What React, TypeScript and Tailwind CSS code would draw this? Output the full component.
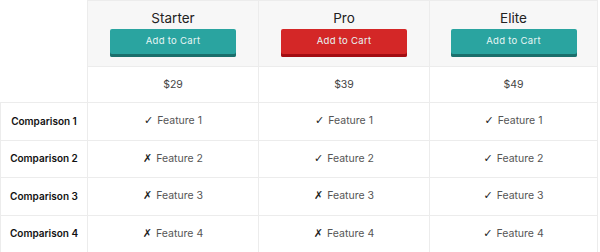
import React from 'react';

interface Plan {
  name: string;
  price: string;
  accent: 'teal' | 'red';
  features: boolean[];
}

const plans: Plan[] = [
  { name: 'Starter', price: '$29', accent: 'teal', features: [true, false, false, false] },
  { name: 'Pro', price: '$39', accent: 'red', features: [true, true, false, false] },
  { name: 'Elite', price: '$49', accent: 'teal', features: [true, true, true, true] },
];

const rows = ['Comparison 1', 'Comparison 2', 'Comparison 3', 'Comparison 4'];

const buttonColor = (accent: Plan['accent']) =>
  accent === 'red'
    ? 'bg-[#d42727] shadow-[inset_0_-3px_0_#a30d12]'
    : 'bg-[#2aa4a0] shadow-[inset_0_-3px_0_#1b6f6c]';

export default function App() {
  return (
    <div
      className="w-[600px] h-[252px] bg-white overflow-hidden"
      style={{ fontFamily: 'Inter, "Open Sans", sans-serif' }}
    >
      <div className="grid grid-cols-[88px_171px_171px_168px] w-[598px]">
        {/* Header */}
        <div className="h-[67px] border-r border-[#ececec]" />
        {plans.map((plan) => (
          <div
            key={plan.name}
            className="h-[67px] bg-[#f7f7f7] border-t border-r border-b border-[#ececec] flex flex-col items-center pt-[8px]"
          >
            <div className="text-[13.5px] leading-[18px] text-[#222]">{plan.name}</div>
            <button
              className={`mt-[2px] w-[126px] h-[28px] rounded-[2px] pb-[3px] text-[9.5px] tracking-[0.3px] text-[#e8f6f5] ${buttonColor(plan.accent)}`}
            >
              Add to Cart
            </button>
          </div>
        ))}

        {/* Price */}
        <div className="h-[36px] border-r border-b border-[#ececec]" />
        {plans.map((plan) => (
          <div
            key={plan.name}
            className="h-[36px] border-r border-b border-[#ececec] flex items-center justify-center text-[10.5px] text-[#444]"
          >
            {plan.price}
          </div>
        ))}

        {/* Comparison rows */}
        {rows.map((label, i) => (
          <React.Fragment key={label}>
            <div className="h-[37.5px] border-l border-r border-b border-[#ececec] flex items-center justify-center text-[10px] font-semibold text-[#111]">
              {label}
            </div>
            {plans.map((plan) => (
              <div
                key={plan.name}
                className="h-[37.5px] border-r border-b border-[#ececec] flex items-center justify-center text-[10.5px] text-[#555]"
              >
                <span
                  className="text-[#222] text-[11px] mr-[4px]"
                  style={{ fontFamily: '"DejaVu Sans", sans-serif' }}
                >
                  {plan.features[i] ? '✓' : '✗'}
                </span>
                Feature {i + 1}
              </div>
            ))}
          </React.Fragment>
        ))}
      </div>
    </div>
  );
}
